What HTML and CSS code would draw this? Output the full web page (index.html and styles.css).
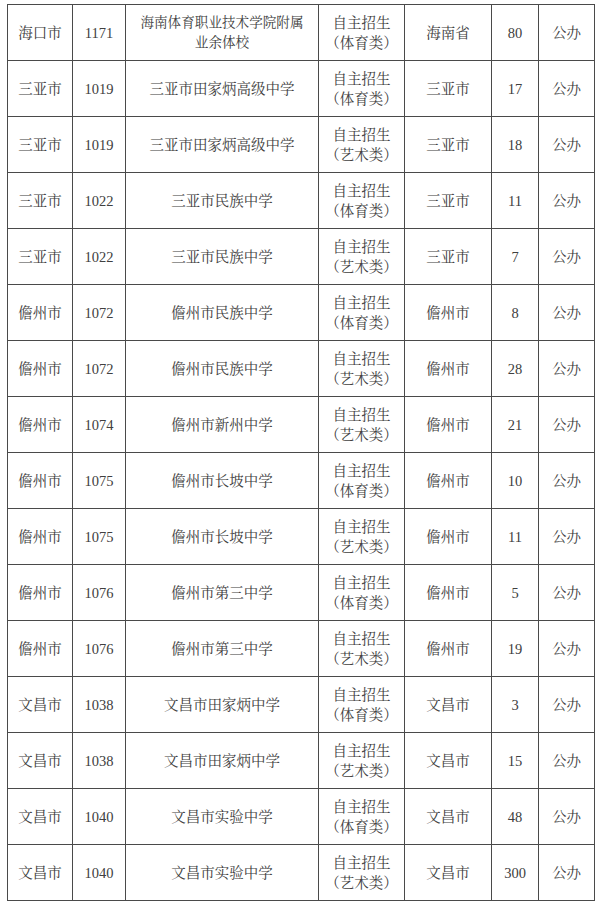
FILE: index.html
```html
<!DOCTYPE html>
<html lang="zh-CN">
<head>
<meta charset="utf-8">
<link rel="stylesheet" href="styles.css">
</head>
<body>
<table class="grid">
<colgroup>
<col class="c1"><col class="c2"><col class="c3"><col class="c4"><col class="c5"><col class="c6"><col class="c7">
</colgroup>
<tbody>
<tr><td>海口市</td><td>1171</td><td class="name">海南体育职业技术学院附属<br>业余体校</td><td>自主招生<br>（体育类）</td><td>海南省</td><td>80</td><td>公办</td></tr>
<tr><td>三亚市</td><td>1019</td><td>三亚市田家炳高级中学</td><td>自主招生<br>（体育类）</td><td>三亚市</td><td>17</td><td>公办</td></tr>
<tr><td>三亚市</td><td>1019</td><td>三亚市田家炳高级中学</td><td>自主招生<br>（艺术类）</td><td>三亚市</td><td>18</td><td>公办</td></tr>
<tr><td>三亚市</td><td>1022</td><td>三亚市民族中学</td><td>自主招生<br>（体育类）</td><td>三亚市</td><td>11</td><td>公办</td></tr>
<tr><td>三亚市</td><td>1022</td><td>三亚市民族中学</td><td>自主招生<br>（艺术类）</td><td>三亚市</td><td>7</td><td>公办</td></tr>
<tr><td>儋州市</td><td>1072</td><td>儋州市民族中学</td><td>自主招生<br>（体育类）</td><td>儋州市</td><td>8</td><td>公办</td></tr>
<tr><td>儋州市</td><td>1072</td><td>儋州市民族中学</td><td>自主招生<br>（艺术类）</td><td>儋州市</td><td>28</td><td>公办</td></tr>
<tr><td>儋州市</td><td>1074</td><td>儋州市新州中学</td><td>自主招生<br>（艺术类）</td><td>儋州市</td><td>21</td><td>公办</td></tr>
<tr><td>儋州市</td><td>1075</td><td>儋州市长坡中学</td><td>自主招生<br>（体育类）</td><td>儋州市</td><td>10</td><td>公办</td></tr>
<tr><td>儋州市</td><td>1075</td><td>儋州市长坡中学</td><td>自主招生<br>（艺术类）</td><td>儋州市</td><td>11</td><td>公办</td></tr>
<tr><td>儋州市</td><td>1076</td><td>儋州市第三中学</td><td>自主招生<br>（体育类）</td><td>儋州市</td><td>5</td><td>公办</td></tr>
<tr><td>儋州市</td><td>1076</td><td>儋州市第三中学</td><td>自主招生<br>（艺术类）</td><td>儋州市</td><td>19</td><td>公办</td></tr>
<tr><td>文昌市</td><td>1038</td><td>文昌市田家炳中学</td><td>自主招生<br>（体育类）</td><td>文昌市</td><td>3</td><td>公办</td></tr>
<tr><td>文昌市</td><td>1038</td><td>文昌市田家炳中学</td><td>自主招生<br>（艺术类）</td><td>文昌市</td><td>15</td><td>公办</td></tr>
<tr><td>文昌市</td><td>1040</td><td>文昌市实验中学</td><td>自主招生<br>（体育类）</td><td>文昌市</td><td>48</td><td>公办</td></tr>
<tr><td>文昌市</td><td>1040</td><td>文昌市实验中学</td><td>自主招生<br>（艺术类）</td><td>文昌市</td><td>300</td><td>公办</td></tr>
</tbody>
</table>
</body>
</html>
```
FILE: styles.css
```css
html, body {
  margin: 0;
  padding: 0;
  background: #ffffff;
}
body {
  padding: 4px 0 0 7px;
}
.grid {
  border-collapse: collapse;
  table-layout: fixed;
  width: 587px;
  font-family: "Liberation Serif", "Noto Serif CJK SC", "Noto Sans CJK SC", serif;
  font-size: 14.5px;
  font-weight: 400;
  color: #404040;
}
.c1 { width: 65px; }
.c2 { width: 53px; }
.c3 { width: 193px; }
.c4 { width: 86px; }
.c5 { width: 87px; }
.c6 { width: 47px; }
.c7 { width: 56px; }
.grid td {
  border: 1px solid #4a4a4a;
  height: 56px;
  padding: 0;
  text-align: center;
  vertical-align: middle;
  line-height: 20px;
  box-sizing: border-box;
}
.grid td.name {
  font-size: 13.6px;
}
```
